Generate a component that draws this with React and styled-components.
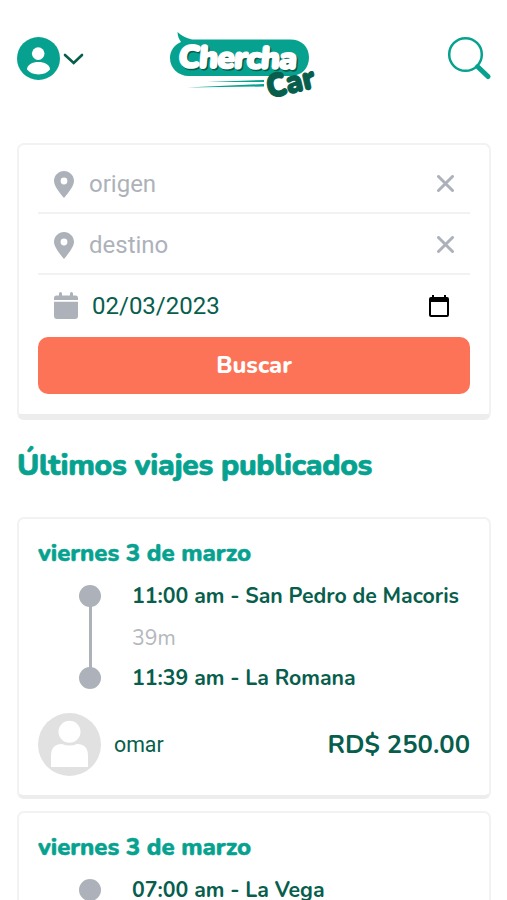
import React, { Component } from 'react';
import styled, { createGlobalStyle } from 'styled-components';

const trips = [
    {
        id: 1,
        date: 'viernes 3 de marzo',
        start: '11:00 am - San Pedro de Macoris',
        duration: '39m',
        end: '11:39 am - La Romana',
        driver: 'omar',
        price: 'RD$ 250.00'
    },
    {
        id: 2,
        date: 'viernes 3 de marzo',
        start: '07:00 am - La Vega'
    }
];

class App extends Component {
    render() {
        return (
            <Page>
                <GlobalStyle />
                <Navbar />
                <SearchForm />
                <Title>Últimos viajes publicados</Title>
                {trips.map(trip => (
                    <Trip key={trip.id} trip={trip} />
                ))}
            </Page>
        );
    }
}

export default App;

class Navbar extends Component {
    render() {
        return (
            <NavWrapper>
                <UserMenu>
                    <svg width="43" height="43" viewBox="0 0 43 43">
                        <circle cx="21.5" cy="21.5" r="21.5" fill="#06a28f" />
                        <circle cx="21.2" cy="16.6" r="6.3" fill="#fff" />
                        <path d="M10 32.5c0-5 5.5-7.6 11.4-7.6S33 27.5 33 32.5c-2.5 3.2-6.5 4.9-11.5 4.9S12.5 35.7 10 32.5z" fill="#fff" />
                    </svg>
                    <svg width="21" height="14" viewBox="0 0 21 14">
                        <path d="M2 4L10.7 12L19 4" fill="none" stroke="#075e4c" strokeWidth="2.6" strokeLinecap="round" />
                    </svg>
                </UserMenu>
                <Logo />
                <svg width="44" height="44" viewBox="0 0 44 44">
                    <circle cx="18.5" cy="18.5" r="16.3" fill="none" stroke="#06a28f" strokeWidth="2.5" />
                    <path d="M31.5 31.5L41 40.5" stroke="#06a28f" strokeWidth="5" strokeLinecap="round" />
                    <path d="M29 29L32 32" stroke="#06a28f" strokeWidth="3" />
                </svg>
            </NavWrapper>
        );
    }
}

function Logo() {
    return (
        <LogoSvg viewBox="0 0 150 70">
            <path d="M7.5 0C12 4 16 6 22 7.5H120C132 7.5 139 15 139 25.5S132 44 120 44H19C8 44 0 36 0 26C0 19 4 13 11 10C9 7 7.5 4 7.5 0z" fill="#06a28f" />
            <g fontSize="32" transform="rotate(0.8 10 34) skewX(-4)">
                <text x="11.5" y="37" textLength="119" fill="#075e4c" stroke="#075e4c" strokeWidth="1.6">Chercha</text>
                <text x="10" y="35.5" textLength="119" fill="#fff" stroke="#fff" strokeWidth="1.6">Chercha</text>
            </g>
            <path d="M37 50L94 48V50z" fill="#06a28f" />
            <path d="M17 55.5L94 52V54.5z" fill="#06a28f" />
            <text x="99" y="66.5" fontSize="33" textLength="49" lengthAdjust="spacingAndGlyphs" transform="rotate(-13 99 66)" fill="#075e4c" stroke="#075e4c" strokeWidth="1.2">Car</text>
        </LogoSvg>
    );
}

function PinIcon() {
    return (
        <svg width="20" height="27" viewBox="0 0 20 27">
            <path fillRule="evenodd" d="M10 0C4.5 0 0 4.4 0 10C0 15 6.3 22.5 10 27C13.7 22.5 20 15 20 10C20 4.4 15.5 0 10 0zM10 6.6A3.4 3.4 0 1 1 10 13.4A3.4 3.4 0 0 1 10 6.6z" fill="#adb2ba" />
        </svg>
    );
}

function ClearIcon() {
    return (
        <ClearSvg width="17" height="17" viewBox="0 0 17 17">
            <path d="M1.5 1.5L15.5 15.5M15.5 1.5L1.5 15.5" stroke="#adb2ba" strokeWidth="3" strokeLinecap="round" />
        </ClearSvg>
    );
}

class SearchForm extends Component {
    render() {
        return (
            <SearchCard>
                <Field>
                    <PinIcon />
                    <Placeholder>origen</Placeholder>
                    <ClearIcon />
                </Field>
                <Field>
                    <PinIcon />
                    <Placeholder>destino</Placeholder>
                    <ClearIcon />
                </Field>
                <DateField>
                    <svg width="24" height="27" viewBox="0 0 24 27">
                        <path d="M0 8V6Q0 3.5 2.5 3.5H5V1.5Q5 0 6.5 0T8 1.5V3.5H16V1.5Q16 0 17.5 0T19 1.5V3.5H21.5Q24 3.5 24 6V8zM0 9.8H24V24Q24 27 21 27H3Q0 27 0 24z" fill="#adb2ba" />
                    </svg>
                    <DateValue>02/03/2023</DateValue>
                    <svg width="20" height="22" viewBox="0 0 20 22">
                        <path fillRule="evenodd" d="M3 2V0H5V2H15V0H17V2H18Q20 2 20 4V20Q20 22 18 22H2Q0 22 0 20V4Q0 2 2 2zM2 7V20H18V7z" fill="#000" />
                    </svg>
                </DateField>
                <SearchButton>Buscar</SearchButton>
            </SearchCard>
        );
    }
}

class Trip extends Component {
    render() {
        const { date, start, duration, end, driver, price } = this.props.trip;
        return (
            <TripCard>
                <TripDate>{date}</TripDate>
                <Route>
                    <Track>
                        <Dot />
                        <Line />
                        <Dot />
                    </Track>
                    <Stops>
                        <Stop>{start}</Stop>
                        <Duration>{duration}</Duration>
                        <Stop>{end}</Stop>
                    </Stops>
                </Route>
                {driver && (
                    <TripFooter>
                        <svg width="63" height="63" viewBox="0 0 63 63">
                            <circle cx="31.5" cy="31.5" r="31.5" fill="#e1e1e1" />
                            <circle cx="31.5" cy="18.7" r="11" fill="#fff" />
                            <path d="M13 54V43Q13 31 24 31Q31.5 34 39 31Q50 31 50 43V54z" fill="#fff" />
                        </svg>
                        <Driver>{driver}</Driver>
                        <Price>{price}</Price>
                    </TripFooter>
                )}
            </TripCard>
        );
    }
}

const GlobalStyle = createGlobalStyle`
    * {
        box-sizing: border-box;
    }
    body {
        margin: 0;
        background: #fff;
        color: #075e4c;
        font-family: Nunito, Lato, sans-serif;
    }
    svg {
        display: block;
        flex-shrink: 0;
    }
`;

const Page = styled.div`
    height: 900px;
    overflow: hidden;
    padding: 0 16px 0 17px;
`;

const NavWrapper = styled.nav`
    display: flex;
    align-items: center;
    justify-content: space-between;
    height: 116px;
    margin-bottom: 27px;
`;

const UserMenu = styled.div`
    display: flex;
    align-items: center;
    gap: 3px;
`;

const LogoSvg = styled.svg`
    width: 150px;
    height: 70px;
    margin: 17px 42px 0 0;
    overflow: visible;
    text {
        font-weight: 900;
        stroke-linejoin: round;
    }
`;

const ClearSvg = styled.svg`
    margin-bottom: 2px;
`;

const Card = styled.section`
    border: 2px solid #f2f2f2;
    border-radius: 7px;
    background: #fff;
`;

const SearchCard = styled(Card)`
    height: 277px;
    padding: 8px 19px 0;
    border-bottom: 6px solid #ededed;
`;

const Field = styled.div`
    display: flex;
    align-items: center;
    height: 61px;
    padding: 3px 16px 0;
    border-bottom: 2px solid #f2f2f3;
`;

const DateField = styled(Field)`
    height: 62px;
    padding: 0 21px 1px 16px;
    border-bottom: 0;
`;

const Placeholder = styled.span`
    flex: 1;
    margin-left: 15px;
    color: #adb2ba;
    font-family: Roboto, sans-serif;
    font-size: 24px;
`;

const DateValue = styled.span`
    flex: 1;
    margin-left: 14px;
    font-family: Roboto, sans-serif;
    font-size: 24px;
`;

const SearchButton = styled.button`
    display: block;
    width: 100%;
    height: 57px;
    padding: 0 0 2px;
    border: 0;
    border-radius: 10px;
    background: #fd7358;
    color: #fff;
    font-family: inherit;
    font-size: 23.5px;
    font-weight: 800;
`;

const Title = styled.h1`
    height: 38px;
    margin: 27px 0 32px;
    color: #06a28f;
    font-size: 30px;
    font-weight: 800;
    letter-spacing: -0.3px;
    line-height: 38px;
    white-space: nowrap;
    -webkit-text-stroke: 0.7px #06a28f;
`;

const TripCard = styled(Card)`
    height: 282px;
    margin-bottom: 12px;
    padding: 18px 19px 0;
    border-bottom: 4px solid #ededed;
`;

const TripDate = styled.h2`
    margin: 0;
    color: #06a28f;
    font-size: 24px;
    font-weight: 800;
    letter-spacing: -0.05px;
    line-height: 32px;
    -webkit-text-stroke: 0.5px #06a28f;
`;

const Route = styled.div`
    display: flex;
    padding: 12px 0 0 41px;
`;

const Track = styled.div`
    display: flex;
    flex-direction: column;
    align-items: center;
    width: 22px;
    height: 108px;
    padding-top: 4px;
`;

const Dot = styled.span`
    width: 22px;
    height: 22px;
    flex-shrink: 0;
    border-radius: 50%;
    background: #adb2ba;
`;

const Line = styled.span`
    width: 3px;
    flex: 1;
    margin: -1px 0;
    background: #adb2ba;
`;

const Stops = styled.div`
    display: flex;
    flex-direction: column;
    margin-left: 31px;
    gap: 11px;
    line-height: 31px;
    white-space: nowrap;
`;

const Stop = styled.span`
    height: 30px;
    font-size: 21.3px;
    font-weight: 700;
`;

const Duration = styled.span`
    height: 30px;
    color: #b5b8bd;
    font-size: 21.3px;
    line-height: 32px;
`;

const TripFooter = styled.div`
    display: flex;
    align-items: center;
    margin-top: 20px;
`;

const Driver = styled.span`
    flex: 1;
    margin-left: 13px;
    font-family: Roboto, sans-serif;
    font-size: 21.3px;
`;

const Price = styled.span`
    font-size: 25.6px;
    font-weight: 700;
`;
